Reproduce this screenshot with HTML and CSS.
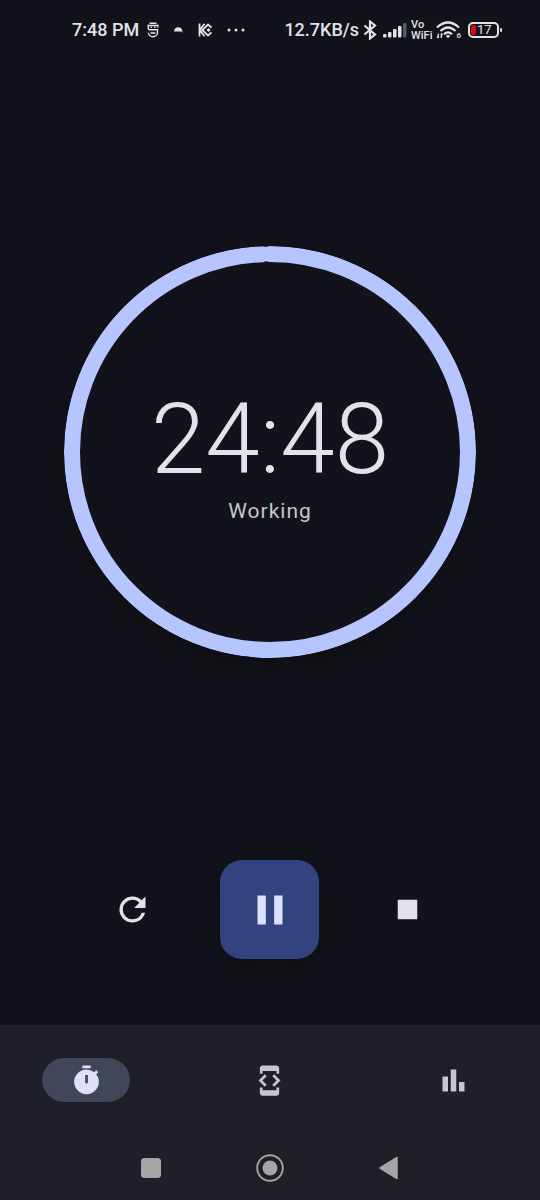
FILE: index.html
```html
<!DOCTYPE html>
<html lang="en">
<head>
<meta charset="utf-8">
<meta name="viewport" content="width=device-width, initial-scale=1">
<title>Timer</title>
<link rel="stylesheet" href="styles.css">
</head>
<body>
<div class="app">
  <header class="status">
    <div class="status-group status-left">
      <span>7:48 PM</span>
      <svg class="icon-face" width="12" height="16" viewBox="0 0 12 16" fill="none" stroke="currentColor" stroke-width="1.400" aria-hidden="true"><path d="M2.500 1.200h7M1.200 2.500v3.700q0 1.500 1.500 1.500h7.800v3a4.500 4 0 0 1-9 0M10.800 5.500v-3M.5 3.500h11M3.500 5.400h1.500M7 5.400h1.500M3.500 11h5"/></svg>
      <svg width="11" height="8" viewBox="0 0 11 8" aria-hidden="true"><path d="M5 5h4.500l1.500 3z" fill="#34343c"/><path d="M1 5.500a4 4 0 0 1 8.500 0z" fill="currentColor"/></svg>
      <svg width="15" height="14" viewBox="0 0 15 14" fill="none" stroke="currentColor" stroke-width="1.800" aria-hidden="true"><path d="M1.500.5v13M6.500.8 1.800 7l4.700 6.200M13.500 4.700 10 1.500 4.300 7l5.700 5.500 3.500-3.200"/><path d="m10.500 5 2 2-2 2-2-2z" fill="currentColor" stroke="none"/></svg>
      <svg width="18" height="4" viewBox="0 0 18 4" fill="currentColor" aria-hidden="true"><circle cx="2" cy="2" r="1.500"/><circle cx="9" cy="2" r="1.500"/><circle cx="16" cy="2" r="1.500"/></svg>
    </div>
    <div class="status-group status-right">
      <span>12.7KB/s</span>
      <svg width="14" height="20" viewBox="0 0 14 20" fill="none" stroke="currentColor" stroke-width="2.200" aria-hidden="true"><path d="m1.500 5.500 10.500 9L7 18.500v-17l5 4-10.500 9"/></svg>
      <svg class="icon-signal" width="24" height="16" viewBox="0 0 24 16" fill="currentColor" aria-hidden="true"><rect y="12" width="3.500" height="3.500" rx="1"/><rect x="5" y="10" width="3.500" height="5.500" rx="1"/><rect x="10" y="7" width="3.500" height="8.500" rx="1"/><rect x="15" y="4" width="3.500" height="11.500" rx="1"/><rect x="20" y="1" width="3.500" height="14.500" rx="1" fill="#5b5b62"/></svg>
      <span class="vowifi"><span>Vo</span><span>WiFi</span></span>
      <span class="wifi">
        <svg width="24" height="18" viewBox="0 0 24 18" fill="none" stroke="currentColor" stroke-width="2.200" aria-hidden="true"><path d="M1 6.500q11-10 22 0M4.500 10q7.500-7 15 0M8 13.300q4-3.800 8 0"/><path d="m9.700 14.800 2.300 2.400 2.300-2.400q-2.300-1.600-4.600 0z" fill="currentColor" stroke="none"/><path d="M2.300 12.500V17M1 15.500 2.300 17M5.300 17v-4.500M6.600 14l-1.300-1.500" stroke-width="1.300"/></svg>
        <span class="wifi-gen">6</span>
      </span>
      <span class="battery"><span class="battery-level"></span><span>17</span></span>
    </div>
  </header>

  <main class="main">
    <section class="timer" aria-label="Timer">
      <svg class="ring" viewBox="0 0 412 412" aria-hidden="true"><circle cx="206" cy="206" r="198" pathLength="1500" stroke-dasharray="1491 9" transform="rotate(-90 206 206)"/></svg>
      <div class="readout">
        <div class="time">24:48</div>
        <div class="state">Working</div>
      </div>
    </section>
    <div class="controls">
      <button class="control" type="button" aria-label="Restart"><svg width="39" height="39" viewBox="0 0 24 24" fill="currentColor" aria-hidden="true"><path d="M17.650 6.350A7.958 7.958 0 0 0 12 4a8 8 0 1 0 7.730 10h-2.080A5.990 5.990 0 0 1 12 18a6 6 0 1 1 0-12c1.660 0 3.140.690 4.220 1.780L13 11h7V4z"/></svg></button>
      <button class="control control-main" type="button" aria-label="Pause"><svg width="50" height="50" viewBox="0 0 24 24" fill="currentColor" aria-hidden="true"><path d="M6 19h4V5H6zm8-14v14h4V5z"/></svg></button>
      <button class="control" type="button" aria-label="Stop"><svg width="39" height="39" viewBox="0 0 24 24" fill="currentColor" aria-hidden="true"><path d="M6 6h12v12H6z"/></svg></button>
    </div>
  </main>

  <nav class="tabs" aria-label="Main">
    <button class="tab tab-active" type="button" aria-label="Timer" aria-current="page"><svg width="33" height="33" viewBox="0 0 24 24" fill="currentColor" aria-hidden="true"><path d="M15 1H9v2h6zm4.030 6.390 1.420-1.420c-.430-.510-.900-.990-1.410-1.410l-1.420 1.420A8.962 8.962 0 0 0 12 4a9 9 0 1 0 7.030 3.390zM13 14h-2V8h2z"/></svg></button>
    <button class="tab" type="button" aria-label="Developer"><svg width="33" height="33" viewBox="0 0 24 24" fill="currentColor" aria-hidden="true"><path d="M7 5h10v2h2V3c0-1.100-.900-1.990-2-1.990L7 1c-1.100 0-2 .900-2 2v4h2zm8.410 11.590L20 12l-4.590-4.590L14 8.830 17.170 12 14 15.170zM10 15.170 6.830 12 10 8.830 8.590 7.410 4 12l4.590 4.590zM17 19H7v-2H5v4c0 1.100.900 2 2 2h10c1.100 0 2-.900 2-2v-4h-2z"/></svg></button>
    <button class="tab" type="button" aria-label="Statistics"><svg width="33" height="33" viewBox="0 0 24 24" fill="currentColor" aria-hidden="true"><path d="M4 9h4v11H4zm12 4h4v7h-4zm-6-9h4v16h-4z"/></svg></button>
  </nav>

  <div class="system">
    <button class="system-button" type="button" aria-label="Recent apps"><svg width="28" height="28" viewBox="0 0 28 28" fill="currentColor" aria-hidden="true"><rect x="4" y="4" width="20" height="20" rx="3.500"/></svg></button>
    <button class="system-button" type="button" aria-label="Home"><svg width="28" height="28" viewBox="0 0 28 28" aria-hidden="true"><circle cx="14" cy="14" r="12.800" fill="none" stroke="currentColor" stroke-width="1.900"/><circle cx="14" cy="14" r="7.500" fill="currentColor"/></svg></button>
    <button class="system-button" type="button" aria-label="Back"><svg width="28" height="28" viewBox="0 0 28 28" fill="currentColor" stroke="currentColor" stroke-width="1.500" stroke-linejoin="round" aria-hidden="true"><path d="M5 14 22 3.500v21z"/></svg></button>
  </div>
</div>
</body>
</html>
```
FILE: styles.css
```css
* {
  box-sizing: border-box;
}

body {
  margin: 0;
  background: #12131a;
  color: #e3e1e9;
  font-family: Roboto, "Liberation Sans", sans-serif;
}

svg {
  display: block;
  flex: none;
}

button {
  display: grid;
  place-items: center;
  padding: 0;
  border: 0;
  background: none;
  color: inherit;
  cursor: pointer;
}

.app {
  display: flex;
  flex-direction: column;
  min-height: 100vh;
}

.status {
  display: flex;
  align-items: center;
  justify-content: space-between;
  height: 60px;
  padding: 0 38px 0 72px;
  font-size: 18px;
  font-weight: 500;
  line-height: 24px;
  white-space: nowrap;
}

.status-group {
  display: flex;
  align-items: center;
}

.status-left {
  gap: 14px;
}

.icon-face {
  margin-left: -6px;
}

.status-right {
  gap: 4px;
}

.icon-signal {
  margin-left: 2px;
}

.vowifi {
  display: flex;
  flex-direction: column;
  font-size: 11px;
  line-height: 11px;
}

.wifi {
  display: flex;
  align-items: flex-end;
}

.wifi-gen {
  margin-left: -4px;
  font-size: 8px;
  line-height: 6px;
}

.battery {
  position: relative;
  display: flex;
  align-items: center;
  gap: 1px;
  width: 31px;
  height: 16px;
  margin: 0 3px;
  padding: 1px;
  border: 2px solid currentColor;
  border-radius: 5px;
  font-size: 13px;
  font-weight: 400;
  line-height: 12px;
}

.battery::after {
  content: "";
  position: absolute;
  top: 4px;
  right: -5px;
  width: 2px;
  height: 4px;
  border-radius: 1px;
  background: currentColor;
}

.battery-level {
  width: 5px;
  height: 10px;
  border-radius: 2px;
  background: #d9090f;
}

.main {
  display: flex;
  flex: 1;
  flex-direction: column;
  gap: 16px;
  padding: 0 64px 66px;
}

.timer {
  display: grid;
  flex: 1;
  place-items: center;
}

.ring,
.readout {
  grid-area: 1 / 1;
}

.ring {
  width: 100%;
  max-width: 480px;
  border-radius: 50%;
  box-shadow: 0 10px 18px #0f1015;
}

.ring circle {
  fill: none;
  stroke: #b6c4ff;
  stroke-width: 16;
  stroke-linecap: round;
}

.readout {
  padding-top: 8px;
  text-align: center;
}

.time {
  font-size: 98px;
  font-weight: 300;
  line-height: 110px;
}

.state {
  color: #c6c5d0;
  font-size: 21px;
  line-height: 32px;
  letter-spacing: 1px;
}

.controls {
  display: grid;
  grid-template-columns: repeat(3, 1fr);
  place-items: center;
}

.control {
  width: 66px;
  height: 66px;
  border-radius: 50%;
}

.control-main {
  width: 99px;
  height: 99px;
  border-radius: 22px;
  background: #32437f;
  color: #dce1ff;
  box-shadow: 0 6px 12px #0f1014;
}

.tabs {
  display: grid;
  grid-template-columns: repeat(3, 1fr);
  gap: 11px;
  place-items: center;
  height: 110px;
  background: #1f1f27;
  color: #c6c5d0;
}

.tab {
  width: 88px;
  height: 44px;
  border-radius: 22px;
}

.tab-active {
  background: #424659;
  color: #dee1f9;
}

.system {
  display: grid;
  grid-template-columns: repeat(3, 1fr);
  place-items: center;
  height: 65px;
  padding: 0 92px;
  background: #1f1f27;
  color: #a6a6a9;
}
```
